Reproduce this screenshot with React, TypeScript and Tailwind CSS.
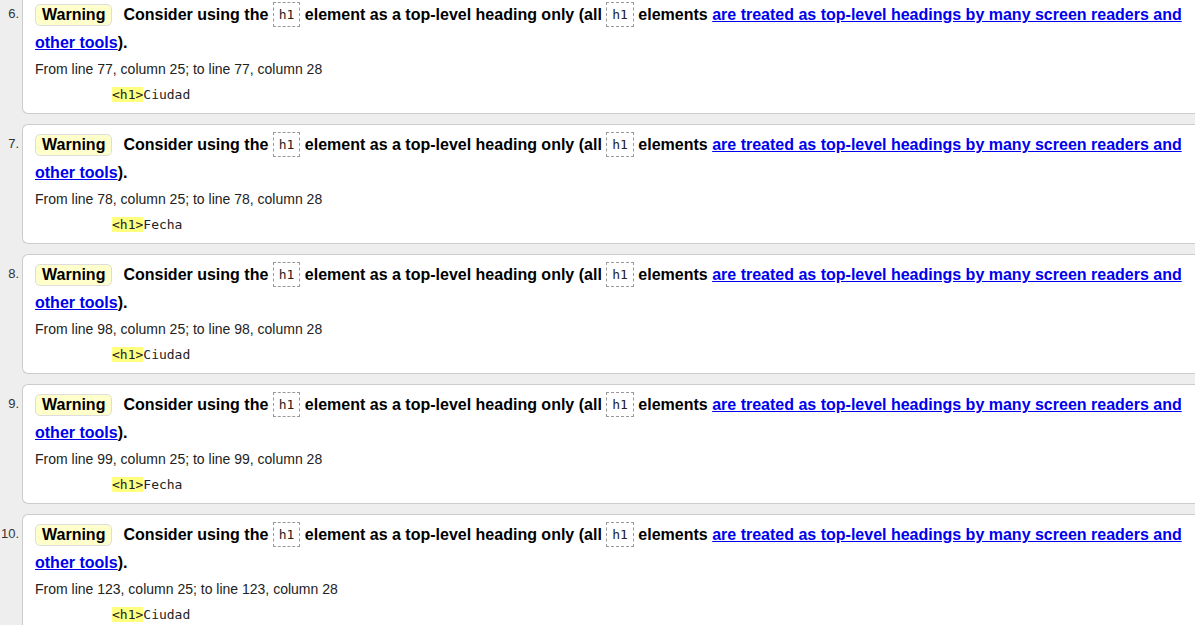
const items = [
  { n: 6, line: 77, text: "Ciudad" },
  { n: 7, line: 78, text: "Fecha" },
  { n: 8, line: 98, text: "Ciudad" },
  { n: 9, line: 99, text: "Fecha" },
  { n: 10, line: 123, text: "Ciudad" },
];

function Code({ children }: { children: string }) {
  return (
    <code className="inline-block border border-dashed border-[#999] bg-white px-[5px] leading-[23px] font-['DejaVu_Sans_Mono',monospace] text-[13px] font-normal text-[#222] align-middle -mt-[3px]">
      {children}
    </code>
  );
}

function Message({ n, line, text }: { n: number; line: number; text: string }) {
  return (
    <li className="flex">
      <div className="w-[19px] shrink-0 pt-[6px] text-right text-[13px] leading-[28px] text-[#333]">{n}.</div>
      <div className="ml-[3px] h-[120px] flex-1 rounded-l-[6px] border border-r-0 border-[#ccc] bg-white pl-[12px]">
        <p className="pt-[6px] text-[16px] font-bold leading-[28px] text-black">
          <span className="mr-[11px] inline-block rounded-[5px] border border-[#ddd] bg-[#ffffcc] px-[6px] leading-[20px]">Warning</span>
          Consider using the <Code>h1</Code> element as a top-level heading only (all <Code>h1</Code> elements{" "}
          <a href="#" className="text-[#0000ee] underline">are treated as top-level headings by many screen readers and other tools</a>).
        </p>
        <p className="mt-[2px] text-[14px] leading-[20px] text-[#222]">
          From line {line}, column 25; to line {line}, column 28
        </p>
        <div className="mt-[6px] ml-[77px] font-['DejaVu_Sans_Mono',monospace] text-[13px] leading-[20px] text-[#222]">
          <span className="bg-[#ffff80]">&lt;h1&gt;</span>{text}
        </div>
      </div>
    </li>
  );
}

export default function App() {
  return (
    <div className="h-[625px] overflow-hidden bg-[#eeeeee] font-['Liberation_Sans',Arial,sans-serif]">
      <ol className="-mt-[6px] flex flex-col gap-[10px]">
        {items.map((it) => (
          <Message key={it.n} {...it} />
        ))}
      </ol>
    </div>
  );
}
